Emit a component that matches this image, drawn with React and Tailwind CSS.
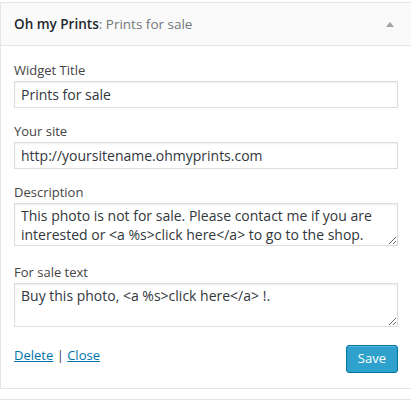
import React from 'react';

const font = { fontFamily: '"Open Sans", "Noto Sans", sans-serif' };

function Field({ label, children, className = '' }) {
  return (
    <div className={`flex flex-col ${className}`}>
      <label className="text-[13px] leading-[18px] text-[#444] mb-[2px]">{label}</label>
      {children}
    </div>
  );
}

export default function App() {
  const inputCls =
    'w-full h-[27px] border border-[#ddd] bg-white px-[6px] text-[14px] text-[#32373c] shadow-[inset_0_1px_2px_rgba(0,0,0,0.07)] outline-none';
  const areaCls =
    'w-full border border-[#ddd] bg-white px-[6px] py-[2px] text-[14px] leading-[19px] text-[#32373c] shadow-[inset_0_1px_2px_rgba(0,0,0,0.07)] outline-none';

  return (
    <div className="w-[411px] h-[401px] bg-white overflow-hidden pt-[2px]" style={font}>
      <div className="w-[420px] border border-[#e5e5e5] bg-white">
        <div className="h-[43px] bg-[#fafafa] border-b border-[#e5e5e5] flex items-center pl-[13px] w-[410px]">
          <div className="flex-1 text-[13.5px] text-[#23282d]">
            <span className="font-semibold">Oh my Prints</span>
            <span className="text-[#72777c]">: Prints for sale</span>
          </div>
          <div className="w-0 h-0 border-l-[4px] border-r-[4px] border-b-[5px] border-l-transparent border-r-transparent border-b-[#a0a5aa] mr-[17px]" />
        </div>
        <div className="w-[410px] pl-[13px] pr-[13px] pt-[15px] pb-[15px]">
          <Field label="Widget Title">
            <input className={inputCls} readOnly value="Prints for sale" />
          </Field>
          <Field label="Your site" className="mt-[14px]">
            <input className={inputCls} readOnly value="http://yoursitename.ohmyprints.com" />
          </Field>
          <Field label="Description" className="mt-[14px]">
            <textarea
              className={`${areaCls} h-[43px]`}
              readOnly
              value="This photo is not for sale. Please contact me if you are interested or <a %s>click here</a> to go to the shop."
            />
          </Field>
          <Field label="For sale text" className="mt-[17px]">
            <textarea
              className={`${areaCls} h-[44px]`}
              readOnly
              value="Buy this photo, <a %s>click here</a> !."
            />
          </Field>
          <div className="flex justify-between items-start mt-[18px]">
            <div className="text-[13px] text-[#444] pt-[1px]">
              <a className="text-[#0073aa] underline">Delete</a>
              <span> | </span>
              <a className="text-[#0073aa] underline">Close</a>
            </div>
            <button className="h-[28px] px-[11px] text-[13px] text-white bg-[#2ea2cc] border border-[#0074a2] rounded-[3px] shadow-[inset_0_1px_0_rgba(120,200,230,0.5)]">
              Save
            </button>
          </div>
        </div>
      </div>
      <div className="mt-[10px] border-t border-[#e5e5e5]" />
    </div>
  );
}
